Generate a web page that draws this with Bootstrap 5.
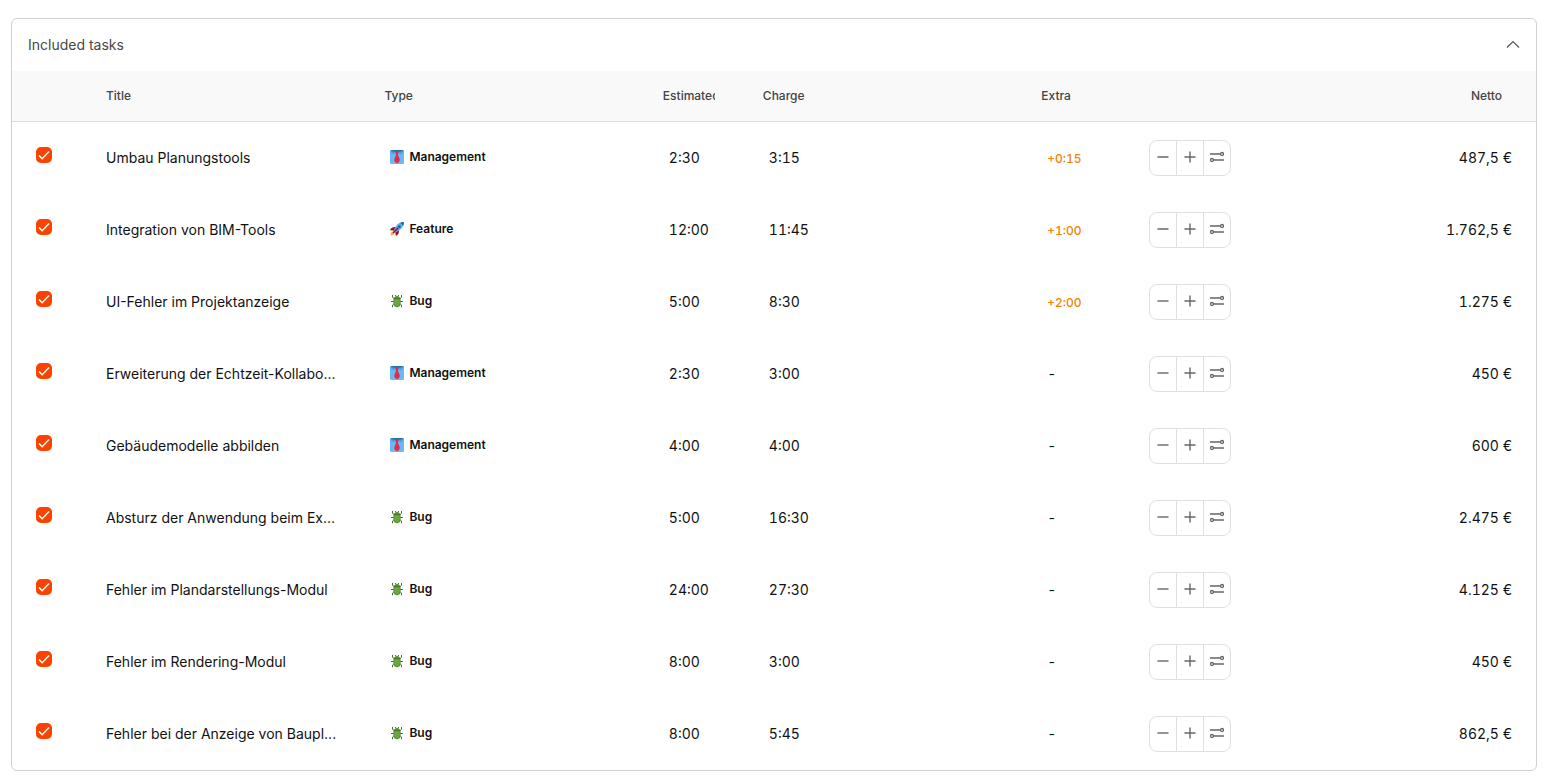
<!DOCTYPE html>
<html lang="de">
<head>
<meta charset="utf-8">
<meta name="viewport" content="width=device-width, initial-scale=1">
<title>Included tasks</title>
<link href="https://cdn.jsdelivr.net/npm/bootstrap@5.3.0/dist/css/bootstrap.min.css" rel="stylesheet">
<style>
  body { font-family: Inter, "Liberation Sans", sans-serif; font-size: 14px; line-height: 20px; color: #111; padding: 18px 13px 7px 11px; }
  .task-card { border: 1px solid #d0d0d0; border-radius: 6px; overflow: hidden; }
  .task-head { height: 52px; padding: 0 16px; color: #484848; }
  .task-head h1 { font-size: 14px; line-height: 20px; font-weight: 400; }
  .task-head button { color: #555; line-height: 0; }
  .task-table { table-layout: fixed; border-collapse: separate; border-spacing: 0; color: #111; }
  .task-table > thead th { height: 51px; padding: 0 16px; vertical-align: middle; background: #f9f9f9; border-bottom: 1px solid #dedede; font-size: 12px; font-weight: 500; color: #444; overflow: hidden; white-space: nowrap; }
  .task-table > tbody td { height: 72px; padding: 0 16px 0 22px; border: 0; white-space: nowrap; }
  .task-table > tbody td.task-title { padding: 0 16px; }
  .task-table > tbody td.task-title > label { display: block; overflow: hidden; text-overflow: ellipsis; }
  .task-table > tbody td.task-pick { padding: 0 0 6px 24px; }
  .task-table > tbody td.task-type { padding-bottom: 2px; font-size: 12px; font-weight: 600; }
  .task-table > tbody td.task-type > span { gap: 5px; }
  .task-table > tbody td.task-tools { padding: 0 0 0 16px; }
  .task-table > tbody td.task-net { padding: 0 24px 0 0; }
  .task-table > thead th.head-net { padding-right: 34px; }
  .task-time { font-variant-numeric: tabular-nums; }
  .c-pick { width: 78px; } .c-wide { width: 18.27%; } .c-est { width: 100px; } .c-extra { width: 108px; } .c-tools { width: 114px; }
  .est-label { display: block; width: 52px; overflow: hidden; }
  .over { color: #f58200; font-size: 12px; font-weight: 500; }
  .form-check-input.task-check { display: block; width: 16px; height: 16px; margin: 0; border: 0; border-radius: 5px; }
  .form-check-input.task-check:checked { background-color: #fa4300; background-size: 16px 16px; background-image: url("data:image/svg+xml,%3Csvg xmlns='http://www.w3.org/2000/svg' viewBox='0 0 16 16'%3E%3Cpath d='M3 8.5l3.2 3.2L13 4.5' fill='none' stroke='%23fff' stroke-width='1.5'/%3E%3C/svg%3E"); }
  .btn-group > .step { width: 28px; height: 36px; padding: 0 0 2px; border: 1px solid #e0e0e0; border-radius: 8px; color: #666; line-height: 0; flex: none; }
</style>
</head>
<body>
<svg width="0" height="0" class="d-none" aria-hidden="true">
  <symbol id="i-minus" viewBox="0 0 16 16"><path d="M2.5 8h11" stroke="currentColor" stroke-width="1.4" fill="none"/></symbol>
  <symbol id="i-plus" viewBox="0 0 16 16"><path d="M2.5 8h11M8 2.5v11" stroke="currentColor" stroke-width="1.4" fill="none"/></symbol>
  <symbol id="i-sliders" viewBox="0 0 16 16"><g fill="none" stroke="currentColor" stroke-width="1.3"><path d="M1 5h10.5M4.5 11H15"/><circle cx="13" cy="5" r="1.5"/><circle cx="3" cy="11" r="1.5"/></g></symbol>
  <symbol id="i-tie" viewBox="0 0 14 14"><rect width="14" height="14" rx="1.6" fill="#6bb8f7"/><path d="M0 1.6Q0 0 1.6 0h10.8Q14 0 14 1.6L10.6 4.2 7 2.2 3.4 4.2z" fill="#4a9fe0"/><path d="M.8.6Q1 0 1.6 0h10.8q.6 0 .8.6L10.5 1.8h-7z" fill="#2c6fa3"/><path d="M5.5 1.4h3L8 5l1.9 4.8Q9.6 12.6 7 13.2 4.4 12.6 4.1 9.8L6 5z" fill="#dd2e44"/></symbol>
  <symbol id="i-rocket" viewBox="0 0 14 14"><path d="M.5 13.5Q.2 10.5 2.2 9.3L4.7 11.8Q3.5 13.8.5 13.5z" fill="#fdb13f"/><path d="M0 8.2Q1.5 4.7 5.6 5L9 8.4Q9.3 12.3 5.8 14L5.4 10.8 3.2 8.6z" fill="#a0041e"/><path d="M13.9.1Q9 .2 6 4.2L3 9l2 2 4.8-3Q13.8 5 13.9.1z" fill="#55acee"/><path d="M13.9.1Q12 .1 10.3.8l2.9 2.9Q13.9 2 13.9.1z" fill="#226699"/><path d="M8.2 5.8L3 11" stroke="#a0041e" stroke-width="1.3"/><circle cx="9.4" cy="4.6" r="1.2" fill="#22527a"/></symbol>
  <symbol id="i-bug" viewBox="0 0 14 14"><path d="M2.5 1v2.4L4.5 5M11.5 1v2.4L9.5 5M1 7.5h12M2.5 13.3v-2.2L4.5 9.5M11.5 13.3v-2.2L9.5 9.5M5.3 1l1 1.8M8.7 1l-1 1.8" fill="none" stroke="#3e721d" stroke-width="1"/><path d="M3.4 4.6Q4.3 2 7 2t3.6 2.6V10Q10 13.3 7 13.3T3.4 10z" fill="#5c913b"/><path d="M4.3 5.2h5.4V10Q9 12.4 7 12.4T4.3 10z" fill="#6ba644"/><path d="M3.7 4.6h6.6" stroke="#3e721d" stroke-width=".7"/></symbol>
</svg>

<main class="task-card">
  <header class="task-head d-flex align-items-center justify-content-between">
    <h1 class="m-0">Included tasks</h1>
    <button type="button" class="btn p-0 border-0" aria-label="Collapse"><svg width="14" height="14" viewBox="0 0 14 14" fill="none" stroke="currentColor" stroke-width="1.2"><path d="M1 9.5l6-6 6 6"/></svg></button>
  </header>
  <table class="table task-table align-middle mb-0">
    <colgroup><col class="c-pick"><col class="c-wide"><col class="c-wide"><col class="c-est"><col class="c-wide"><col class="c-extra"><col class="c-tools"><col></colgroup>
    <thead>
      <tr><th></th><th>Title</th><th>Type</th><th><span class="est-label">Estimated</span></th><th>Charge</th><th>Extra</th><th></th><th class="head-net text-end">Netto</th></tr>
    </thead>
    <tbody>
      <tr>
        <td class="task-pick"><input class="form-check-input task-check" type="checkbox" id="t1" checked></td>
        <td class="task-title"><label for="t1">Umbau Planungstools</label></td>
        <td class="task-type"><span class="d-flex align-items-center"><svg width="14" height="14"><use href="#i-tie"/></svg>Management</span></td>
        <td class="task-time">2:30</td><td class="task-time">3:15</td><td class="task-time"><span class="over">+0:15</span></td>
        <td class="task-tools"><div class="btn-group"><button type="button" class="btn step" aria-label="Less"><svg width="16" height="16"><use href="#i-minus"/></svg></button><button type="button" class="btn step" aria-label="More"><svg width="16" height="16"><use href="#i-plus"/></svg></button><button type="button" class="btn step" aria-label="Adjust"><svg width="16" height="16"><use href="#i-sliders"/></svg></button></div></td>
        <td class="task-net task-time text-end">487,5 €</td>
      </tr>
      <tr>
        <td class="task-pick"><input class="form-check-input task-check" type="checkbox" id="t2" checked></td>
        <td class="task-title"><label for="t2">Integration von BIM-Tools</label></td>
        <td class="task-type"><span class="d-flex align-items-center"><svg width="14" height="14"><use href="#i-rocket"/></svg>Feature</span></td>
        <td class="task-time">12:00</td><td class="task-time">11:45</td><td class="task-time"><span class="over">+1:00</span></td>
        <td class="task-tools"><div class="btn-group"><button type="button" class="btn step" aria-label="Less"><svg width="16" height="16"><use href="#i-minus"/></svg></button><button type="button" class="btn step" aria-label="More"><svg width="16" height="16"><use href="#i-plus"/></svg></button><button type="button" class="btn step" aria-label="Adjust"><svg width="16" height="16"><use href="#i-sliders"/></svg></button></div></td>
        <td class="task-net task-time text-end">1.762,5 €</td>
      </tr>
      <tr>
        <td class="task-pick"><input class="form-check-input task-check" type="checkbox" id="t3" checked></td>
        <td class="task-title"><label for="t3">UI-Fehler im Projektanzeige</label></td>
        <td class="task-type"><span class="d-flex align-items-center"><svg width="14" height="14"><use href="#i-bug"/></svg>Bug</span></td>
        <td class="task-time">5:00</td><td class="task-time">8:30</td><td class="task-time"><span class="over">+2:00</span></td>
        <td class="task-tools"><div class="btn-group"><button type="button" class="btn step" aria-label="Less"><svg width="16" height="16"><use href="#i-minus"/></svg></button><button type="button" class="btn step" aria-label="More"><svg width="16" height="16"><use href="#i-plus"/></svg></button><button type="button" class="btn step" aria-label="Adjust"><svg width="16" height="16"><use href="#i-sliders"/></svg></button></div></td>
        <td class="task-net task-time text-end">1.275 €</td>
      </tr>
      <tr>
        <td class="task-pick"><input class="form-check-input task-check" type="checkbox" id="t4" checked></td>
        <td class="task-title"><label for="t4">Erweiterung der Echtzeit-Kollabo...</label></td>
        <td class="task-type"><span class="d-flex align-items-center"><svg width="14" height="14"><use href="#i-tie"/></svg>Management</span></td>
        <td class="task-time">2:30</td><td class="task-time">3:00</td><td class="task-time">-</td>
        <td class="task-tools"><div class="btn-group"><button type="button" class="btn step" aria-label="Less"><svg width="16" height="16"><use href="#i-minus"/></svg></button><button type="button" class="btn step" aria-label="More"><svg width="16" height="16"><use href="#i-plus"/></svg></button><button type="button" class="btn step" aria-label="Adjust"><svg width="16" height="16"><use href="#i-sliders"/></svg></button></div></td>
        <td class="task-net task-time text-end">450 €</td>
      </tr>
      <tr>
        <td class="task-pick"><input class="form-check-input task-check" type="checkbox" id="t5" checked></td>
        <td class="task-title"><label for="t5">Gebäudemodelle abbilden</label></td>
        <td class="task-type"><span class="d-flex align-items-center"><svg width="14" height="14"><use href="#i-tie"/></svg>Management</span></td>
        <td class="task-time">4:00</td><td class="task-time">4:00</td><td class="task-time">-</td>
        <td class="task-tools"><div class="btn-group"><button type="button" class="btn step" aria-label="Less"><svg width="16" height="16"><use href="#i-minus"/></svg></button><button type="button" class="btn step" aria-label="More"><svg width="16" height="16"><use href="#i-plus"/></svg></button><button type="button" class="btn step" aria-label="Adjust"><svg width="16" height="16"><use href="#i-sliders"/></svg></button></div></td>
        <td class="task-net task-time text-end">600 €</td>
      </tr>
      <tr>
        <td class="task-pick"><input class="form-check-input task-check" type="checkbox" id="t6" checked></td>
        <td class="task-title"><label for="t6">Absturz der Anwendung beim Ex...</label></td>
        <td class="task-type"><span class="d-flex align-items-center"><svg width="14" height="14"><use href="#i-bug"/></svg>Bug</span></td>
        <td class="task-time">5:00</td><td class="task-time">16:30</td><td class="task-time">-</td>
        <td class="task-tools"><div class="btn-group"><button type="button" class="btn step" aria-label="Less"><svg width="16" height="16"><use href="#i-minus"/></svg></button><button type="button" class="btn step" aria-label="More"><svg width="16" height="16"><use href="#i-plus"/></svg></button><button type="button" class="btn step" aria-label="Adjust"><svg width="16" height="16"><use href="#i-sliders"/></svg></button></div></td>
        <td class="task-net task-time text-end">2.475 €</td>
      </tr>
      <tr>
        <td class="task-pick"><input class="form-check-input task-check" type="checkbox" id="t7" checked></td>
        <td class="task-title"><label for="t7">Fehler im Plandarstellungs-Modul</label></td>
        <td class="task-type"><span class="d-flex align-items-center"><svg width="14" height="14"><use href="#i-bug"/></svg>Bug</span></td>
        <td class="task-time">24:00</td><td class="task-time">27:30</td><td class="task-time">-</td>
        <td class="task-tools"><div class="btn-group"><button type="button" class="btn step" aria-label="Less"><svg width="16" height="16"><use href="#i-minus"/></svg></button><button type="button" class="btn step" aria-label="More"><svg width="16" height="16"><use href="#i-plus"/></svg></button><button type="button" class="btn step" aria-label="Adjust"><svg width="16" height="16"><use href="#i-sliders"/></svg></button></div></td>
        <td class="task-net task-time text-end">4.125 €</td>
      </tr>
      <tr>
        <td class="task-pick"><input class="form-check-input task-check" type="checkbox" id="t8" checked></td>
        <td class="task-title"><label for="t8">Fehler im Rendering-Modul</label></td>
        <td class="task-type"><span class="d-flex align-items-center"><svg width="14" height="14"><use href="#i-bug"/></svg>Bug</span></td>
        <td class="task-time">8:00</td><td class="task-time">3:00</td><td class="task-time">-</td>
        <td class="task-tools"><div class="btn-group"><button type="button" class="btn step" aria-label="Less"><svg width="16" height="16"><use href="#i-minus"/></svg></button><button type="button" class="btn step" aria-label="More"><svg width="16" height="16"><use href="#i-plus"/></svg></button><button type="button" class="btn step" aria-label="Adjust"><svg width="16" height="16"><use href="#i-sliders"/></svg></button></div></td>
        <td class="task-net task-time text-end">450 €</td>
      </tr>
      <tr>
        <td class="task-pick"><input class="form-check-input task-check" type="checkbox" id="t9" checked></td>
        <td class="task-title"><label for="t9">Fehler bei der Anzeige von Baupl...</label></td>
        <td class="task-type"><span class="d-flex align-items-center"><svg width="14" height="14"><use href="#i-bug"/></svg>Bug</span></td>
        <td class="task-time">8:00</td><td class="task-time">5:45</td><td class="task-time">-</td>
        <td class="task-tools"><div class="btn-group"><button type="button" class="btn step" aria-label="Less"><svg width="16" height="16"><use href="#i-minus"/></svg></button><button type="button" class="btn step" aria-label="More"><svg width="16" height="16"><use href="#i-plus"/></svg></button><button type="button" class="btn step" aria-label="Adjust"><svg width="16" height="16"><use href="#i-sliders"/></svg></button></div></td>
        <td class="task-net task-time text-end">862,5 €</td>
      </tr>
    </tbody>
  </table>
</main>
<script src="https://cdn.jsdelivr.net/npm/bootstrap@5.3.0/dist/js/bootstrap.bundle.min.js"></script>
</body>
</html>
